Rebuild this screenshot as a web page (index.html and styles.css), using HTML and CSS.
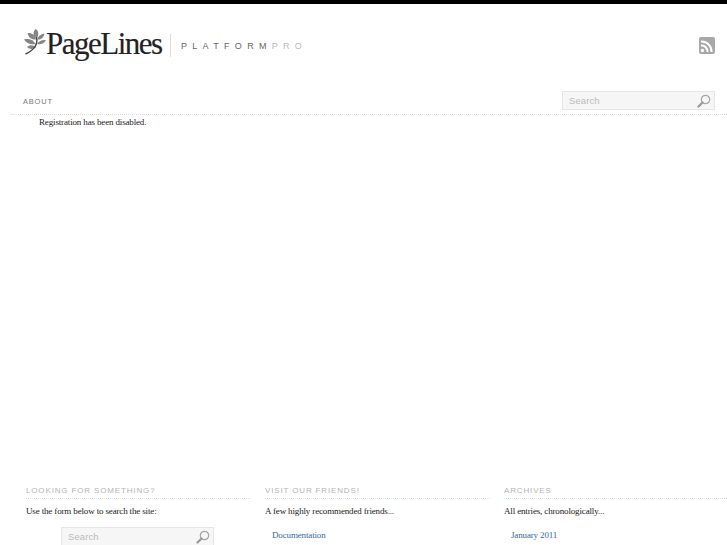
FILE: index.html
```html
<!DOCTYPE html>
<html lang="en">
<head>
<meta charset="utf-8">
<title>PageLines Platform Pro</title>
<link rel="stylesheet" href="styles.css">
</head>
<body>
<div class="page">
  <header class="header">
    <a class="logo">
      <svg class="leaf" width="22" height="28" viewBox="0 0 22 28">
        <g fill="#858585">
          <path d="M11.500 0 C15 2 15 6 12.500 9.500 C9 7 8.500 3 11.500 0Z"/>
          <path d="M3.500 4 C8 3.500 11 6 12 10.500 C7.500 11 4.500 8.500 3.500 4Z"/>
          <path d="M20.500 4.500 C20 8 17.500 11 13.500 10.500 C14 7 16.500 5 20.500 4.500Z"/>
          <path d="M0 10.500 C5 9 9.500 11 11.500 15 C6.500 16 2.500 14.500 0 10.500Z"/>
          <path d="M22 11 C20 14.500 17 16 13 15 C15 12 18 10.500 22 11Z"/>
          <path d="M3 18 C6 15.500 10 16 12 18.500 C8.500 20.500 5.500 20.500 3 18Z"/>
        </g>
        <path d="M12.500 8 C14 15 10.500 21 1.500 25" fill="none" stroke="#444" stroke-width="1.400"/>
      </svg>
      <span class="wordmark">PageLines</span>
      <span class="divider"></span>
      <span class="tagline">PLATFORM<span class="tagline-light">PRO</span></span>
    </a>
    <svg class="rss" width="16" height="17" viewBox="0 0 16 17">
      <rect x="0" y="0" width="16" height="17" rx="2" fill="#a8a8a8"/>
      <circle cx="3.500" cy="13.500" r="1.700" fill="#fff"/>
      <path d="M2 8.500 A6 6 0 0 1 8.500 15" fill="none" stroke="#fff" stroke-width="2"/>
      <path d="M2 4.500 A10 10 0 0 1 12.500 15" fill="none" stroke="#fff" stroke-width="2"/>
    </svg>
  </header>
  <nav class="nav">
    <a class="nav-link">ABOUT</a>
    <form class="search">
      <span class="search-text">Search</span>
      <svg class="search-icon" width="14" height="14" viewBox="0 0 14 14">
        <circle cx="8.500" cy="5.500" r="4.200" fill="none" stroke="#a5a5a5" stroke-width="1.200"/>
        <path d="M5.500 8.500 L1.500 12.500" stroke="#999" stroke-width="2.200" stroke-linecap="round"/>
      </svg>
    </form>
  </nav>
  <main class="content">
    <p class="message">Registration has been disabled.</p>
  </main>
  <footer class="footer">
    <section class="widget">
      <h3 class="widget-title">LOOKING FOR SOMETHING?</h3>
      <p class="widget-text">Use the form below to search the site:</p>
      <form class="search search-footer">
        <span class="search-text">Search</span>
        <svg class="search-icon" width="14" height="14" viewBox="0 0 14 14">
          <circle cx="8.500" cy="5.500" r="4.200" fill="none" stroke="#a5a5a5" stroke-width="1.200"/>
          <path d="M5.500 8.500 L1.500 12.500" stroke="#999" stroke-width="2.200" stroke-linecap="round"/>
        </svg>
      </form>
    </section>
    <section class="widget">
      <h3 class="widget-title">VISIT OUR FRIENDS!</h3>
      <p class="widget-text">A few highly recommended friends...</p>
      <a class="widget-link">Documentation</a>
    </section>
    <section class="widget">
      <h3 class="widget-title">ARCHIVES</h3>
      <p class="widget-text">All entries, chronologically...</p>
      <a class="widget-link">January 2011</a>
    </section>
  </footer>
</div>
</body>
</html>
```
FILE: styles.css
```css
html, body {
  margin: 0;
  padding: 0;
  height: 545px;
  overflow: hidden;
  background: #fff;
}
.page {
  border-top: 4px solid #000;
  font-family: "Liberation Serif", serif;
  color: #222;
}
.header {
  display: flex;
  justify-content: space-between;
  align-items: flex-start;
  height: 87px;
  padding: 0 12px 0 24px;
}
.logo {
  display: flex;
  align-items: flex-start;
  padding-top: 23px;
}
.leaf {
  margin-top: 2px;
  flex: none;
}
.wordmark {
  font-size: 31px;
  line-height: 34px;
  letter-spacing: -1.500px;
  color: #222;
  width: 115px;
  white-space: nowrap;
  -webkit-text-stroke: 0.15px #222;
}
.divider {
  width: 1px;
  height: 23px;
  background: #ddd;
  margin: 7px 10px 0 9px;
}
.tagline {
  font-family: "Liberation Sans", sans-serif;
  font-size: 9px;
  line-height: 12px;
  letter-spacing: 5.300px;
  color: #666;
  margin-top: 13px;
  white-space: nowrap;
}
.tagline-light {
  color: #bbb;
}
.rss {
  margin-top: 33px;
}
.nav {
  display: flex;
  justify-content: space-between;
  align-items: flex-start;
  margin-left: 11px;
  height: 23px;
  padding: 0 12px;
  border-bottom: 1px dotted #ddd;
}
.nav-link {
  font-family: "Liberation Sans", sans-serif;
  font-size: 7.500px;
  letter-spacing: 0.800px;
  color: #777;
  line-height: 10px;
  margin-top: 6px;
}
.search {
  box-sizing: border-box;
  width: 153px;
  height: 19px;
  background: #f6f6f6;
  border: 1px solid #e6e6e6;
  display: flex;
  justify-content: space-between;
  align-items: center;
  padding: 0 3px 0 6px;
}
.search-text {
  font-family: "Liberation Sans", sans-serif;
  font-size: 9.500px;
  color: #bbb;
  letter-spacing: 0.100px;
}
.content {
  height: 370px;
  padding-left: 39px;
}
.message {
  margin: 0;
  padding-top: 1px;
  font-size: 9px;
  letter-spacing: -0.150px;
  line-height: 12px;
  color: #222;
}
.footer {
  display: grid;
  grid-template-columns: repeat(3, 225px);
  column-gap: 14px;
  padding-left: 26px;
}
.widget-title {
  margin: 0;
  font-family: "Liberation Sans", sans-serif;
  font-weight: normal;
  font-size: 8px;
  letter-spacing: 0.850px;
  line-height: 12px;
  color: #b4b4b4;
  padding-bottom: 1px;
  border-bottom: 1px dotted #ddd;
}
.widget-text {
  margin: 6px 0 0;
  font-size: 9px;
  letter-spacing: -0.150px;
  line-height: 12px;
  color: #222;
}
.widget .search-footer {
  margin: 10px 0 0 35px;
}
.widget-link {
  display: block;
  margin: 12px 0 0 7px;
  font-size: 9px;
  letter-spacing: -0.150px;
  line-height: 12px;
  color: #36699f;
}
```
